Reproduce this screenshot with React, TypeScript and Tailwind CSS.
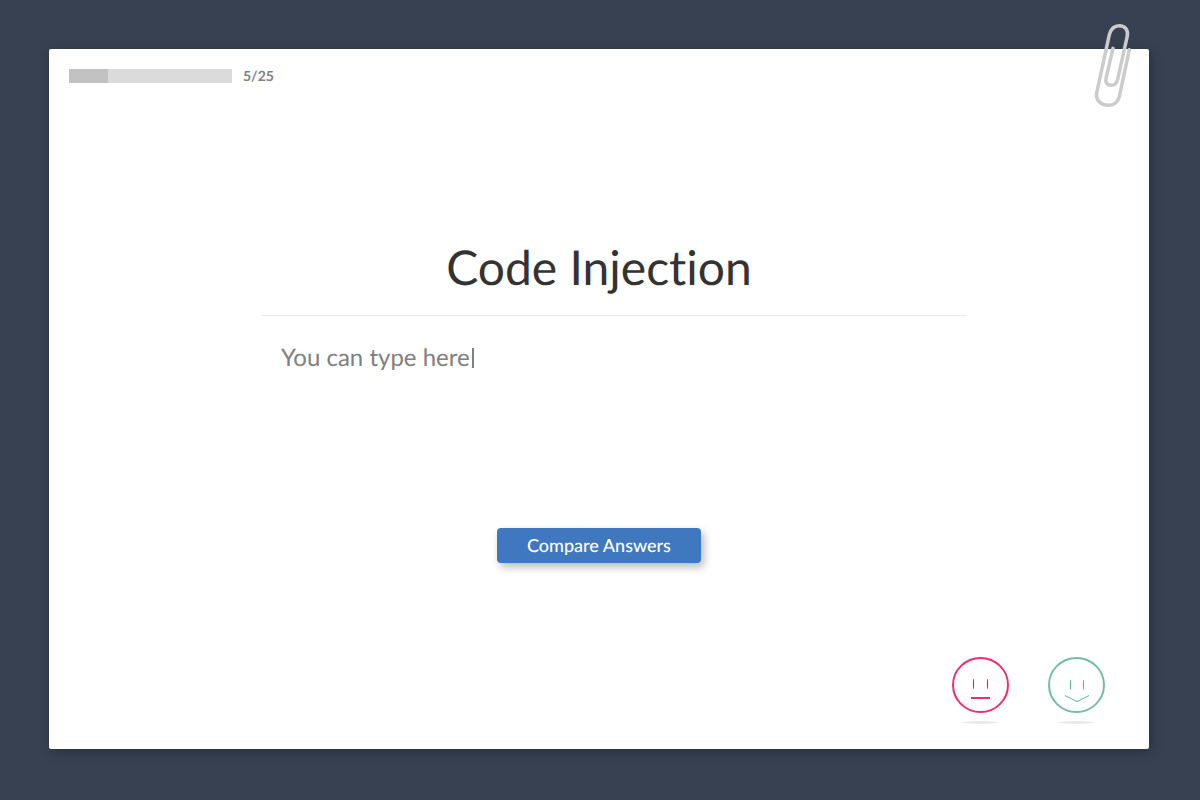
const PROGRESS_PERCENT = 24;

function Paperclip() {
  return (
    <svg
      className="absolute -top-[27px] right-[15px] h-[86px] w-[42px]"
      viewBox="36 36 126 258"
      fill="none"
      stroke="#cbcbcb"
      strokeWidth="10.5"
      strokeLinecap="round"
      aria-hidden="true"
    >
      <path d="M148 119 L118 260 C113 279 100 286 86 286 C62 286 46 270 50 249 L88 74 C93 55 103 47 118 47 C136 47 145 61 142 78 L113 208 C110 220 104 226 94 226 C82 226 75 218 78 205 L99 115" />
    </svg>
  );
}

function NeutralFace() {
  return (
    <svg className="h-[70px] w-[58px]" viewBox="0 0 58 70" fill="none" aria-hidden="true">
      <ellipse cx="29.5" cy="29" rx="27.5" ry="27" stroke="#ed2f70" strokeWidth="2" />
      <ellipse cx="22.5" cy="28" rx="0.6" ry="5.2" fill="#d0265f" />
      <ellipse cx="36.5" cy="28" rx="0.6" ry="5.2" fill="#d0265f" />
      <path d="M20 42H39" stroke="#ed2f70" strokeWidth="2" />
      <ellipse cx="29.5" cy="66.5" rx="17.5" ry="1.5" fill="#e9e9e9" />
    </svg>
  );
}

function HappyFace() {
  return (
    <svg className="h-[70px] w-[58px]" viewBox="0 0 58 70" fill="none" aria-hidden="true">
      <ellipse cx="29.5" cy="29" rx="27.5" ry="27" stroke="#74bda5" strokeWidth="2" />
      <ellipse cx="23.5" cy="29" rx="0.6" ry="5.2" fill="#5fb397" />
      <ellipse cx="36.5" cy="29" rx="0.6" ry="5.2" fill="#5fb397" />
      <path d="M18 39.5L30 45.7L42 39.5" stroke="#65b399" strokeWidth="1" />
      <ellipse cx="29.5" cy="66.5" rx="17.5" ry="1.5" fill="#e9e9e9" />
    </svg>
  );
}

export default function App() {
  return (
    <div className="flex min-h-screen bg-[#374152] pt-[49px] pr-[51px] pb-[51px] pl-[49px] font-['Lato',sans-serif] [font-variant-ligatures:none] [text-rendering:geometricPrecision]">
      <main className="relative flex flex-1 flex-col rounded-xs bg-white shadow-[2px_3px_12px_rgba(0,0,0,0.25)]">
        <Paperclip />

        <header className="flex items-center gap-[11px] px-5 pt-[17px]">
          <div
            className="h-3.5 w-[163px] bg-[#dbdbdb]"
            role="progressbar"
            aria-label="Progress"
            aria-valuenow={5}
            aria-valuemax={25}
          >
            <div className="h-full bg-[#c2c2c2]" style={{ width: `${PROGRESS_PERCENT}%` }} />
          </div>
          <span className="text-sm leading-5 font-bold text-[#808080]">5/25</span>
        </header>

        <section className="mx-auto mt-[152px] flex w-full max-w-[736px] flex-col items-center">
          <h1 className="text-5xl leading-[60px] text-[#333333]">
            <label htmlFor="answer">Code Injection</label>
          </h1>
          <div className="w-full pl-[31px]">
            <div className="mt-[17px] flex h-[213px] items-start border-t border-[#e9e9e9] px-[19px] pt-[26px]">
              <input
                id="answer"
                type="text"
                defaultValue="You can type here"
                className="[field-sizing:content] h-8 max-w-full bg-transparent p-0 text-2xl leading-8 text-[#808080] outline-none [text-rendering:geometricPrecision]"
              />
              <span className="mt-1.5 ml-0.5 h-5 w-0.5 bg-[#808080]" aria-hidden="true" />
            </div>
          </div>
          <button
            type="button"
            className="h-[35px] w-[204px] rounded-[4px] bg-[#3f78bf] pb-0.5 text-lg leading-6 font-medium text-white shadow-[3px_4px_8px_rgba(0,0,0,0.28)] [text-rendering:geometricPrecision]"
          >
            Compare Answers
          </button>
        </section>

        <footer className="mt-auto flex justify-end gap-[38px] pr-[44px] pb-[23px]">
          <button type="button" aria-label="Did not know">
            <NeutralFace />
          </button>
          <button type="button" aria-label="Knew it">
            <HappyFace />
          </button>
        </footer>
      </main>
    </div>
  );
}
